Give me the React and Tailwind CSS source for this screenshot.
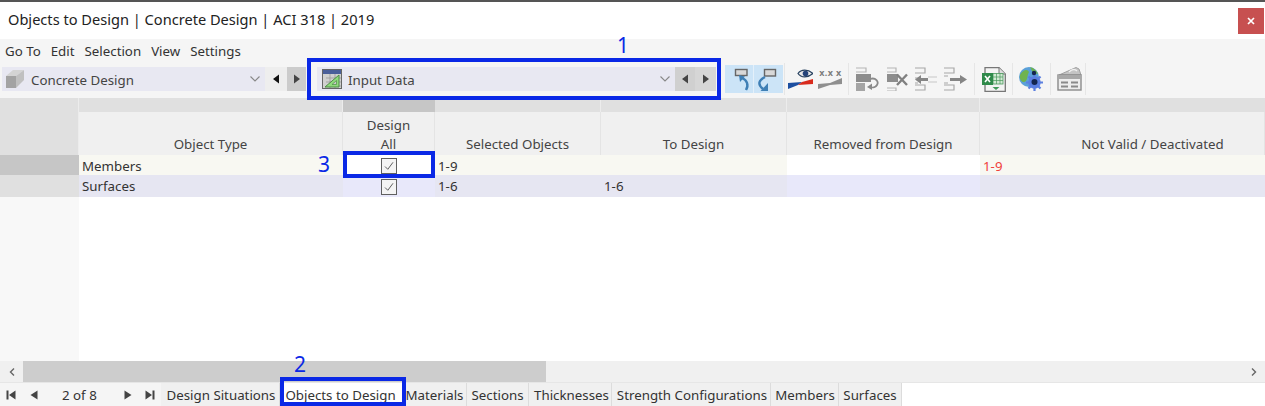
const font = { fontFamily: '"Noto Sans", "Open Sans", sans-serif' };

const Tri = ({ dir, on }) => (
  <svg width="8" height="10" viewBox="0 0 8 10" className={on ? "text-[#111]" : "text-[#444]"}>
    <path d={dir === "l" ? "M7 0.5V9.5L1 5Z" : "M1 0.5V9.5L7 5Z"} fill="currentColor" />
  </svg>
);

const Chevron = () => (
  <svg width="12" height="8" viewBox="0 0 12 8" className="text-[#888]">
    <path d="M1.5 1.5L6 6L10.5 1.5" fill="none" stroke="currentColor" strokeWidth="1.1" />
  </svg>
);

const ConcreteIcon = () => (
  <svg width="19" height="19" viewBox="0 0 19 19">
    <path d="M0 6L7 0H18L10 6Z" fill="#d4d4d4" />
    <path d="M10 6L18 0V10L10 18Z" fill="#c0c0c0" />
    <path d="M0 6H10V18H0Z" fill="#a3a3a3" />
  </svg>
);

const InputIcon = () => (
  <svg width="20" height="20" viewBox="0 0 20 20">
    <rect x="0.5" y="0.5" width="19" height="19" fill="#d0d0d0" stroke="#666" />
    <rect x="1" y="1" width="18" height="4" fill="#4a5f9a" />
    <path d="M4 9H19M4 13H19M4 17H19M8 5V19M13 5V19" stroke="#9a9a9a" strokeWidth="0.8" />
    <path d="M3 18L17 6V18Z" fill="#8fdc7c" stroke="#4d8c45" />
    <path d="M10 15.5L14.5 11.5V15.5Z" fill="#c9c9c9" stroke="#4d8c45" strokeWidth="0.7" />
  </svg>
);

const UndoIcon = () => (
  <svg width="28" height="28" viewBox="0 0 28 28">
    <rect x="10.5" y="4.5" width="11.5" height="6" fill="#d8d8d8" stroke="#666" strokeWidth="1.4" />
    <path d="M17 13C22 15 24 20 21 25" fill="none" stroke="#3f7fb5" strokeWidth="2.4" />
    <path d="M14 10L20 11.5L15 17Z" fill="#3f7fb5" />
  </svg>
);

const RedoIcon = () => (
  <svg width="29" height="28" viewBox="0 0 29 28">
    <rect x="10.5" y="4.5" width="11" height="6.5" fill="#d8d8d8" stroke="#666" strokeWidth="1.4" />
    <path d="M11 12C5 15 3 19 9 24" fill="none" stroke="#3f7fb5" strokeWidth="2.4" />
    <path d="M14 18V26H6.5Z" fill="#3f7fb5" />
  </svg>
);

const EyeIcon = () => (
  <svg width="25" height="20" viewBox="0 0 25 20">
    <path d="M10 4.5C13 0 20 0 25 4.5C20 9 13 9 10 4.5Z" fill="#e8e8e8" stroke="#26405f" strokeWidth="1.2" />
    <circle cx="17.5" cy="4.5" r="2.8" fill="#24437a" />
    <path d="M0 14L14 13L10 16L0 20Z" fill="#1c4ea0" />
    <path d="M14 13L25 10V15L10 16Z" fill="#d92b1d" />
  </svg>
);

const XxxIcon = () => (
  <svg width="25" height="26" viewBox="0 -3 25 26">
    <text x="12.5" y="7" textAnchor="middle" fontSize="9" fontWeight="700" letterSpacing="0.4" fill="#7d7d7d" style={font}>x.x x</text>
    <path d="M0 15L12 14L24 9V15L12 16L0 20Z" fill="#8f8f8f" />
  </svg>
);

const RowReturn = () => (
  <svg width="23" height="24" viewBox="0 0 23 24">
    <path d="M0 1H10V5H0" fill="none" stroke="#b5b5b5" strokeWidth="1.2" />
    <rect x="0" y="7" width="15" height="8" fill="#8d8d8d" />
    <rect x="0" y="16" width="9" height="8" fill="#a5a5a5" />
    <path d="M14 12C20 10 23 15 21 18C20 20 17 21 14 20" fill="none" stroke="#8a8a8a" strokeWidth="1.8" />
    <path d="M16 16.5V23L11 20Z" fill="#8a8a8a" />
  </svg>
);

const RowDelete = () => (
  <svg width="22" height="24" viewBox="0 0 22 24">
    <path d="M1 1H10V5H1M1 21H10V24H1" fill="none" stroke="#b5b5b5" strokeWidth="1.2" />
    <rect x="1" y="7" width="11" height="8" fill="#8d8d8d" />
    <path d="M11 7.5L21 18M21 7.5L11 18" stroke="#808080" strokeWidth="2.4" />
  </svg>
);

const RowIn = () => (
  <svg width="22" height="24" viewBox="0 0 22 24">
    <path d="M0 1H10V6H0M0 18H10V23H0M3 11H0M3 16H0" fill="none" stroke="#a8a8a8" strokeWidth="1.2" />
    <path d="M13 10H22M13 15H22" stroke="#c8c8c8" strokeWidth="1.2" />
    <path d="M0 12.5L6 8V11H13V14H6V17Z" fill="#858585" />
  </svg>
);

const RowOut = () => (
  <svg width="23" height="24" viewBox="0 0 23 24">
    <path d="M0 1H10V6H0M0 18H10V23H0M0 9H4M0 16H4" fill="none" stroke="#a8a8a8" strokeWidth="1.2" />
    <path d="M6 11H16V8L23 12.5L16 17V14H6Z" fill="#858585" />
  </svg>
);

const ExcelIcon = () => (
  <svg width="24" height="25" viewBox="0 0 24 25">
    <path d="M3 0.7H17L23.3 7V24.3H3Z" fill="#f4f4f4" stroke="#777" strokeWidth="1.3" />
    <path d="M17 0.7V7H23.3" fill="#ddd" stroke="#777" strokeWidth="1" />
    <rect x="11" y="6.5" width="10" height="10.5" fill="#d2ead4" stroke="#4a9a5c" strokeWidth="0.8" />
    <path d="M11 10H21M11 13.5H21M14.5 6.5V17M18 6.5V17" stroke="#4a9a5c" strokeWidth="0.7" />
    <rect x="0" y="6" width="11" height="12" fill="#2f8a4a" />
    <path d="M3 9L8 15M8 9L3 15" stroke="#fff" strokeWidth="1.6" />
    <path d="M10.5 20H17.5L14 23Z" fill="#3f9a58" />
  </svg>
);

const GlobeIcon = () => (
  <svg width="24" height="24" viewBox="0 0 24 24">
    <circle cx="10" cy="10" r="10" fill="#5aa0d8" />
    <path d="M1 8C4 2 9 2 10 5C8 8 9 11 7 14C4 17 0 13 1 8Z" fill="#6fb34f" />
    <path d="M11 0C15 1 18 4 19 7L14 6Z" fill="#6fb34f" />
    <circle cx="15.5" cy="15.5" r="6.2" fill="#5b7fe0" />
    <path d="M15.5 6.5V24M7 15.5H24M9.5 9.5L21.5 21.5M21.5 9.5L9.5 21.5" stroke="#5b7fe0" strokeWidth="2.2" />
    <circle cx="15.5" cy="15" r="3" fill="#14264f" />
    <circle cx="15" cy="6" r="2.2" fill="#14264f" />
  </svg>
);

const ClapIcon = () => (
  <svg width="25" height="24" viewBox="0 0 25 24">
    <path d="M2 8L19 0.5L22 2L24 8Z" fill="#c4c4c4" stroke="#a0a0a0" />
    <path d="M12 5C15 2 18 2 20 4" fill="none" stroke="#f0f0f0" strokeWidth="1.4" />
    <rect x="1" y="8" width="23" height="15" fill="#ededed" stroke="#8a8a8a" strokeWidth="1.4" />
    <rect x="1" y="8" width="23" height="4" fill="#a8a8a8" />
    <path d="M4 15.5H11M14 15.5H21M4 19.5H11M14 19.5H21" stroke="#8a8a8a" strokeWidth="1.8" />
  </svg>
);

const Sep = ({ cls }) => <div className={`w-px h-[32px] bg-[#e6e6e6] ${cls}`} />;

const Check = () => (
  <div className="w-[16px] h-[16px] border border-[#606060] flex items-center justify-center bg-[#f4f4f4]">
    <svg width="12" height="12" viewBox="0 0 12 12">
      <path d="M2 6.5L4.8 9.3L10 2.3" fill="none" stroke="#606060" strokeWidth="1" />
    </svg>
  </div>
);

const headers = [
  ["Object Type", "text-center"],
  ["Design All", "text-center"],
  ["Selected Objects", "text-center"],
  ["To Design", "text-center"],
  ["Removed from Design", "text-center"],
  ["Not Valid / Deactivated", "text-center pl-[61px]"],
];

const tabs = ["Design Situations", "Objects to Design", "Materials", "Sections", "Thicknesses", "Strength Configurations", "Members", "Surfaces"];
const tabWidths = ["w-[119px] pl-[2px]", "w-[125px] pr-[3px]", "w-[62px] pr-[2px]", "w-[62px]", "w-[83px] pl-[3px]", "w-[159px] pl-[2px]", "w-[68px] pl-[1px]", "w-[63px]"];

const gridCols = "grid grid-cols-[79px_264px_92px_166px_186px_193px_285px]";

export default function App() {
  return (
    <div style={font} className="relative w-[1265px] h-[406px] overflow-hidden bg-white text-[13.3px] text-[#333]">
      <div className="h-[2px] bg-[#555]" />

      {/* title bar */}
      <div className="h-[37px] flex items-center justify-between pl-[8px] pr-[1px]">
        <span className="text-[14.6px] text-[#222] mt-[-1px]">Objects to Design | Concrete Design | ACI 318 | 2019</span>
        <button className="w-[26px] h-[26px] bg-[#c75050] flex items-center justify-center mt-[1px]">
          <svg width="8" height="8" viewBox="0 0 8 8">
            <path d="M1 1L7 7M7 1L1 7" stroke="#fff" strokeWidth="1.7" />
          </svg>
        </button>
      </div>

      {/* menu + toolbar */}
      <div className="h-[59px] bg-[#f5f5f5]">
        <div className="h-[23px] flex items-center gap-[10px] pl-[5px] pt-[2px] text-[#333]">
          <span>Go To</span>
          <span>Edit</span>
          <span>Selection</span>
          <span>View</span>
          <span>Settings</span>
        </div>

        <div className="h-[36px] flex items-center pl-[2px] pb-[2px]">
          <div className="w-[263px] h-[24px] bg-[#e8e8f2] flex items-center pl-[4px] pr-[4px]">
            <ConcreteIcon />
            <span className="ml-[6px] flex-1 text-[#444] mt-[3px]">Concrete Design</span>
            <Chevron />
          </div>
          <div className="w-[22px] h-[24px] bg-[#eeeeee] flex items-center justify-center"><Tri dir="l" on /></div>
          <div className="w-[19px] h-[24px] bg-[#cccccc] flex items-center justify-center"><Tri dir="r" /></div>

          <div className="ml-[11px] w-[358px] h-[24px] bg-[#e8e8f2] flex items-center pl-[5px] pr-[4px]">
            <InputIcon />
            <span className="ml-[6px] flex-1 text-[#444] mt-[3px]">Input Data</span>
            <Chevron />
          </div>
          <div className="w-[20px] h-[24px] bg-[#d0d0d0] flex items-center justify-center"><Tri dir="l" /></div>
          <div className="w-[21px] h-[24px] bg-[#d6d6d6] flex items-center justify-center"><Tri dir="r" /></div>

          <div className="ml-[9px] flex items-center">
            <div className="w-[28px] h-[28px] bg-[#cce4f7]"><UndoIcon /></div>
            <div className="w-[1px] h-[28px] bg-[#e4f0fa]" />
            <div className="w-[29px] h-[28px] bg-[#cce4f7]"><RedoIcon /></div>
            <Sep cls="ml-[1px] mr-[3px]" />
            <EyeIcon />
            <div className="w-[5px]" />
            <XxxIcon />
            <Sep cls="ml-[5px] mr-[7px]" />
            <RowReturn />
            <div className="w-[7px]" />
            <RowDelete />
            <div className="w-[7px]" />
            <RowIn />
            <div className="w-[7px]" />
            <RowOut />
            <Sep cls="ml-[7px] mr-[7px]" />
            <ExcelIcon />
            <Sep cls="ml-[6px] mr-[6px]" />
            <GlobeIcon />
            <Sep cls="ml-[7px] mr-[6px]" />
            <ClapIcon />
            <Sep cls="ml-[3px]" />
          </div>
        </div>
      </div>

      {/* table */}
      <div className="h-[263px] flex flex-col">
        <div className={`${gridCols} h-[14px] bg-[#e0e0e0]`}>
          <div className="border-r border-[#ececec]" />
          <div className="border-r border-[#ececec]" />
          <div className="bg-[#c6c6c6]" />
          <div className="border-r border-[#ececec]" />
          <div className="border-r border-[#ececec]" />
          <div className="border-r border-[#ececec]" />
          <div />
        </div>

        <div className={`${gridCols} h-[43px]`}>
          <div className="bg-[#e0e0e0] border-r border-[#ececec]" />
          {headers.map(([label, align], i) => (
            <div key={label} className={`bg-[#f0f0f0] border-r border-[#e4e4e4] flex items-end justify-center pb-[1px] leading-[19px] text-[#444] ${align}`}>
              {i === 1 ? <span>Design<br />All</span> : <span className="block w-full">{label}</span>}
            </div>
          ))}
        </div>

        <div className={`${gridCols} h-[20px] leading-[22px] bg-[#f8f8f2]`}>
          <div className="bg-[#c6c6c6]" />
          <div className="pl-[3px] text-[#333]">Members</div>
          <div className="bg-white flex items-center justify-center"><Check /></div>
          <div className="pl-[3px]">1-9</div>
          <div />
          <div className="bg-white" />
          <div className="pl-[3px] text-[#f0403c]">1-9</div>
        </div>

        <div className={`${gridCols} h-[22px] leading-[23px] bg-[#e6e6f2]`}>
          <div className="bg-[#e0e0e0]" />
          <div className="pl-[3px] text-[#333]">Surfaces</div>
          <div className="bg-[#e8e8fa] flex items-center justify-center"><Check /></div>
          <div className="pl-[3px]">1-6</div>
          <div className="pl-[3px]">1-6</div>
          <div className="bg-[#e8e8fa]" />
          <div />
        </div>

        <div className="flex-1 flex">
          <div className="w-[79px] bg-[#f8f8f8]" />
          <div className="flex-1 bg-white" />
        </div>
      </div>

      {/* scrollbar */}
      <div className="h-[21px] bg-[#f0f0f0] flex items-center">
        <div className="w-[23px] flex justify-center">
          <svg width="8" height="10" viewBox="0 0 8 10"><path d="M6 1.5L2.5 5L6 8.5" fill="none" stroke="#666" strokeWidth="1.4" /></svg>
        </div>
        <div className="w-[523px] h-full bg-[#cdcdcd]" />
        <div className="flex-1 flex justify-end pr-[7px]">
          <svg width="8" height="10" viewBox="0 0 8 10"><path d="M2 1.5L5.5 5L2 8.5" fill="none" stroke="#666" strokeWidth="1.4" /></svg>
        </div>
      </div>

      {/* sheet tabs */}
      <div className="h-[24px] flex items-center bg-white border-t border-[#e6e6e6]">
        <div className="w-[161px] h-full flex items-center bg-[#f5f5f5] pt-[1px]">
          <svg className="ml-[6px]" width="10" height="10" viewBox="0 0 10 10"><path d="M0.5 0.5H2.5V9.5H0.5ZM9.5 0.5V9.5L3 5Z" fill="#444" /></svg>
          <svg className="ml-[14px]" width="8" height="10" viewBox="0 0 8 10"><path d="M7.5 0.5V9.5L0.5 5Z" fill="#444" /></svg>
          <span className="ml-[24px] w-[56px] text-[#333] pt-[2px]">2 of 8</span>
          <svg className="ml-[6px]" width="8" height="10" viewBox="0 0 8 10"><path d="M0.5 0.5V9.5L7.5 5Z" fill="#444" /></svg>
          <svg className="ml-[13px]" width="10" height="10" viewBox="0 0 10 10"><path d="M0.5 0.5V9.5L7 5ZM7.5 0.5H9.5V9.5H7.5Z" fill="#444" /></svg>
        </div>
        {tabs.map((t, i) => (
          <div key={t} className={`${tabWidths[i]} h-full flex items-center justify-center whitespace-nowrap border-r border-[#dcdcdc] text-[#333] pt-[3px] ${i === 1 ? "bg-white" : "bg-[#f0f0f0]"}`}>
            {t}
          </div>
        ))}
      </div>

      {/* blue callouts drawn over the screenshot */}
      <div className="absolute left-[307px] top-[58px] w-[414px] h-[42px] border-4 border-[#0a28e6]" />
      <div className="absolute left-[343px] top-[151px] w-[92px] h-[27px] border-4 border-[#0a28e6]" />
      <div className="absolute left-[280px] top-[377px] w-[126px] h-[29px] border-4 border-[#0a28e6]" />
      <span className="absolute left-[617px] top-[32px] text-[21px] leading-[26px] text-[#0a28e6]">1</span>
      <span className="absolute left-[318px] top-[151px] text-[21px] leading-[26px] text-[#0a28e6]">3</span>
      <span className="absolute left-[294px] top-[351px] text-[21px] leading-[26px] text-[#0a28e6]">2</span>
    </div>
  );
}
